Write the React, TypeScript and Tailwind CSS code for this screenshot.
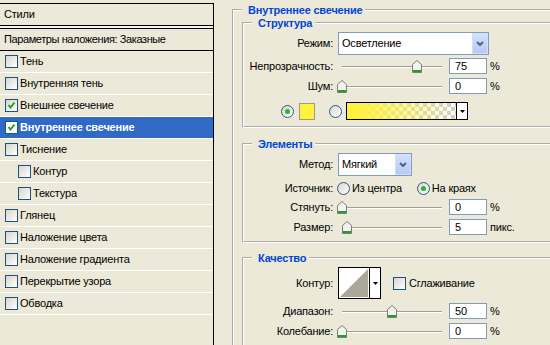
import React from "react";

type Layer = { label: string; checked?: boolean; active?: boolean; sub?: boolean };

const layers: Layer[] = [
  { label: "Тень" },
  { label: "Внутренняя тень" },
  { label: "Внешнее свечение", checked: true },
  { label: "Внутреннее свечение", checked: true, active: true },
  { label: "Тиснение" },
  { label: "Контур", sub: true },
  { label: "Текстура", sub: true },
  { label: "Глянец" },
  { label: "Наложение цвета" },
  { label: "Наложение градиента" },
  { label: "Перекрытие узора" },
  { label: "Обводка" },
];

const Check = ({ checked = false, white = false, className = "" }: { checked?: boolean; white?: boolean; className?: string }) => (
  <span
    className={`flex h-[13px] w-[13px] shrink-0 items-center justify-center border border-[#1c5180] ${
      white ? "bg-white" : "bg-linear-to-br from-[#d6d5cc] to-white"
    } ${className}`}
  >
    {checked && (
      <svg width="9" height="9" viewBox="0 0 9 9">
        <path d="M1.5 4 L3.5 6.5 L7.5 1.5" fill="none" stroke="#21a121" strokeWidth="2" />
      </svg>
    )}
  </span>
);

const Radio = ({ on = false, className = "" }: { on?: boolean; className?: string }) => (
  <span
    className={`flex h-[13px] w-[13px] shrink-0 items-center justify-center rounded-full border border-[#2b5a85] bg-linear-to-br from-[#d6d5cc] to-white ${className}`}
  >
    {on && <span className="h-[5px] w-[5px] rounded-full bg-[#2fb32f]" />}
  </span>
);

const Tri = () => (
  <svg width="5" height="3" viewBox="0 0 5 3">
    <path d="M0 0 H5 L2.5 3 Z" fill="#000" />
  </svg>
);

const Legend = ({ children }: { children: React.ReactNode }) => (
  <legend className="ml-[8px] pl-[6px] pr-[3px] text-[11px] font-bold leading-[14px] text-[#0046d5]">{children}</legend>
);

const Row = ({ label, className = "", children }: { label: string; className?: string; children: React.ReactNode }) => (
  <div className={`flex items-center ${className}`}>
    <span className="w-[89px] shrink-0 text-right">{label}</span>
    {children}
  </div>
);

const Select = ({ value, className }: { value: string; className: string }) => (
  <div className={`ml-[5px] flex h-[23px] border border-[#7f9db9] bg-white ${className}`}>
    <span className="flex flex-1 items-center pl-[3px]">{value}</span>
    <span className="flex w-[16px] items-center justify-center border border-[#d2defb] bg-linear-to-b from-[#d3e0fd] to-[#b6c9f6]">
      <svg width="8" height="5" viewBox="0 0 8 5">
        <path d="M1 1 L4 4 L7 1" fill="none" stroke="#4d6185" strokeWidth="2" />
      </svg>
    </span>
  </div>
);

const Slider = ({ value }: { value: number }) => (
  <div className="relative ml-[4px] h-[13px] w-[109px] shrink-0">
    <div className="absolute left-[5px] top-[6px] h-[2px] w-[100px] border-t border-[#a2a094] bg-white" />
    <svg className="absolute top-0" style={{ left: value }} width="10" height="13" viewBox="0 0 10 13">
      <path d="M0.5 4.5 L5 0.5 L9.5 4.5 L9.5 12.5 L0.5 12.5 Z" fill="#f3f3ef" stroke="#7c7c78" />
      <path d="M1 11 H9" stroke="#21a121" strokeWidth="2" />
    </svg>
  </div>
);

const Field = ({ value }: { value: string }) => (
  <span className="ml-[3px] flex h-[16px] w-[38px] shrink-0 items-center border border-[#7f9db9] bg-white pl-[5px]">{value}</span>
);

const groupBox = "[border:2px_groove_#fff]";

export default function App() {
  return (
    <div className="flex h-[345px] w-[550px] overflow-hidden bg-[#ece9d8] font-['Liberation_Sans',Tahoma,sans-serif] text-[11px] leading-[13px] tracking-[-0.2px] text-black">
      <aside className="mt-[3px] flex w-[214px] shrink-0 flex-col border-r border-t border-black">
        <div className="flex h-[22px] items-center border-b border-black pl-[4px]">Стили</div>
        <div className="h-[2px] bg-[#f4f3ec]" />
        <div className="flex h-[23px] items-center border-y border-black pl-[4px] tracking-[-0.4px]">Параметры наложения: Заказные</div>
        {layers.map((l) => (
          <div
            key={l.label}
            className={`flex h-[22px] items-center border-b border-white ${l.sub ? "pl-[18px]" : "pl-[5px]"} ${
              l.active ? "bg-[#316ac5] font-bold text-white" : ""
            }`}
          >
            <Check checked={l.checked} white={l.active} />
            <span className="ml-[2px]">{l.label}</span>
          </div>
        ))}
      </aside>

      <div className="min-w-0 flex-1 pl-[18px]">
        <fieldset className={`mt-[3px] w-[345px] shrink-0 ${groupBox}`}>
          <Legend>Внутреннее свечение</Legend>

          <fieldset className={`mx-[8px] -mt-px pb-[6px] ${groupBox}`}>
            <Legend>Структура</Legend>
            <Row label="Режим:" className="mt-[2px] h-[23px]">
              <Select value="Осветление" className="w-[151px]" />
            </Row>
            <Row label="Непрозрачность:" className="mt-[3px] h-[16px]">
              <Slider value={75} />
              <Field value="75" />
              <span className="ml-[3px]">%</span>
            </Row>
            <Row label="Шум:" className="mt-[4px] h-[16px]">
              <Slider value={0} />
              <Field value="0" />
              <span className="ml-[3px]">%</span>
            </Row>
            <div className="mt-[8px] flex h-[18px] items-center pl-[37px]">
              <Radio on />
              <span className="ml-[5px] h-[17px] w-[16px] border border-[#9a9a90] bg-[#fff23c]" />
              <Radio className="ml-[14px]" />
              <div className="ml-[4px] flex h-[18px] w-[122px] border border-black">
                <div className="flex-1 bg-[image:repeating-conic-gradient(#cfcfcf_0%_25%,#ffffff_0%_50%)] bg-[length:8px_8px]">
                  <div className="h-full w-full bg-linear-to-r from-[#fff23c] from-10% to-[#fff23c00]" />
                </div>
                <div className="flex w-[11px] items-center justify-center border-l border-black bg-white">
                  <Tri />
                </div>
              </div>
            </div>
          </fieldset>

          <fieldset className={`mx-[8px] mt-[9px] pb-[6px] ${groupBox}`}>
            <Legend>Элементы</Legend>
            <Row label="Метод:" className="mt-[2px] h-[22px]">
              <Select value="Мягкий" className="w-[74px]" />
            </Row>
            <Row label="Источник:" className="mt-[6px] h-[14px]">
              <Radio className="ml-[4px]" />
              <span className="ml-[2px]">Из центра</span>
              <Radio on className="ml-[15px]" />
              <span className="ml-[2px]">На краях</span>
            </Row>
            <Row label="Стянуть:" className="mt-[4px] h-[16px]">
              <Slider value={0} />
              <Field value="0" />
              <span className="ml-[3px]">%</span>
            </Row>
            <Row label="Размер:" className="mt-[4px] h-[16px]">
              <Slider value={5} />
              <Field value="5" />
              <span className="ml-[3px]">пикс.</span>
            </Row>
          </fieldset>

          <fieldset className={`mx-[8px] mt-[8px] pb-[20px] ${groupBox}`}>
            <Legend>Качество</Legend>
            <Row label="Контур:" className="mt-[2px] h-[32px]">
              <div className="ml-[5px] flex h-[32px] w-[43px] border border-black bg-white">
                <div className="p-px">
                  <svg width="28" height="28" viewBox="0 0 28 28">
                    <polygon points="0,28 28,0 28,28" fill="#aca899" />
                  </svg>
                </div>
                <div className="flex flex-1 items-center justify-center border-l border-black">
                  <Tri />
                </div>
              </div>
              <Check className="ml-[12px]" />
              <span className="ml-[3px]">Сглаживание</span>
            </Row>
            <Row label="Диапазон:" className="mt-[4px] h-[16px]">
              <Slider value={50} />
              <Field value="50" />
              <span className="ml-[3px]">%</span>
            </Row>
            <Row label="Колебание:" className="mt-[4px] h-[16px]">
              <Slider value={0} />
              <Field value="0" />
              <span className="ml-[3px]">%</span>
            </Row>
          </fieldset>
        </fieldset>
      </div>
    </div>
  );
}
